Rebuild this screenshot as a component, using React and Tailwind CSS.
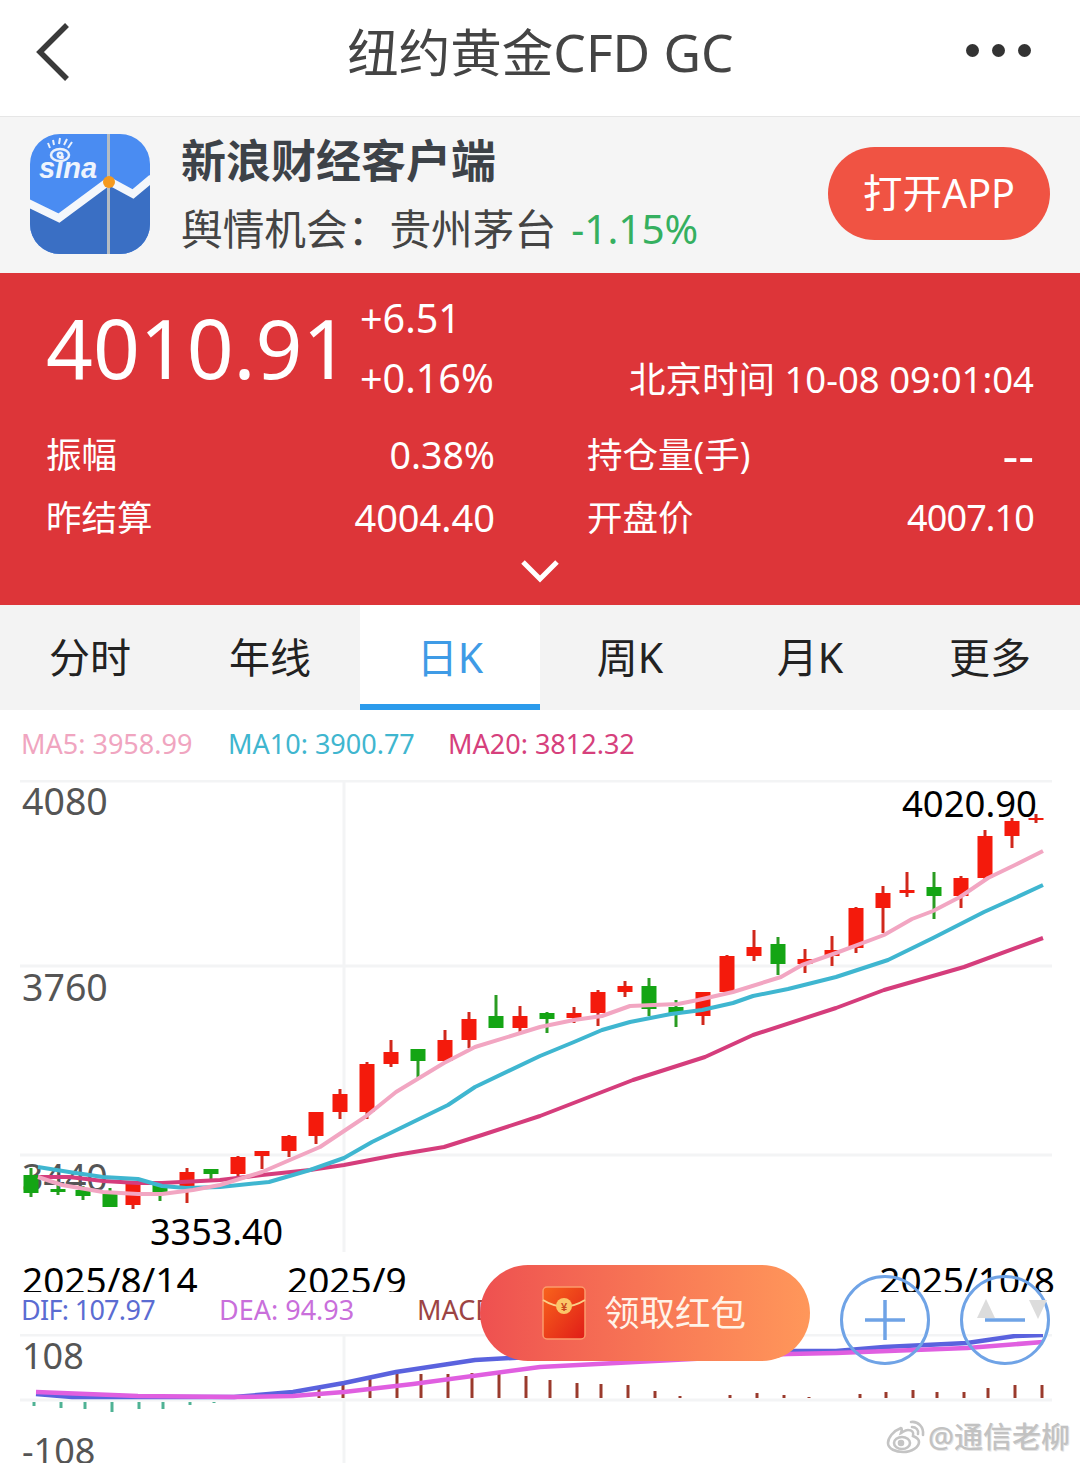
const FONT = "font-['Noto_Sans','Noto_Sans_CJK_SC',sans-serif]";

// x, wickTop, wickBottom, bodyTop, bodyBottom, up?
const candles = [
  [31, 1168, 1197, 1175, 1193, 0], [58, 1185, 1195, 1189, 1192, 0], [83, 1186, 1200, 1190, 1196, 0],
  [110, 1188, 1207, 1194, 1207, 0], [133, 1183, 1209, 1183, 1205, 1], [160, 1185, 1201, 1185, 1193, 0],
  [187, 1168, 1203, 1172, 1186, 1], [211, 1169, 1179, 1169, 1174, 0], [238, 1156, 1176, 1157, 1174, 1],
  [262, 1151, 1169, 1151, 1156, 1], [289, 1135, 1157, 1136, 1151, 1], [316, 1112, 1144, 1112, 1136, 1],
  [340, 1089, 1119, 1094, 1112, 1], [367, 1062, 1119, 1064, 1112, 1], [391, 1040, 1067, 1052, 1064, 1],
  [418, 1049, 1078, 1049, 1061, 0], [445, 1030, 1063, 1040, 1061, 1], [469, 1012, 1048, 1019, 1040, 1],
  [496, 995, 1028, 1016, 1028, 0], [520, 1006, 1032, 1016, 1028, 1], [547, 1012, 1033, 1013, 1019, 0],
  [574, 1007, 1023, 1013, 1018, 1], [598, 990, 1026, 992, 1013, 1], [625, 981, 997, 986, 992, 1],
  [649, 978, 1016, 986, 1009, 0], [676, 1000, 1027, 1007, 1013, 0], [703, 992, 1025, 992, 1016, 1],
  [727, 955, 992, 956, 992, 1], [754, 930, 961, 947, 956, 1], [778, 937, 975, 944, 964, 0],
  [805, 949, 973, 959, 964, 1], [832, 936, 966, 950, 956, 1], [856, 907, 953, 908, 948, 1],
  [883, 886, 933, 893, 908, 1], [907, 872, 897, 890, 893, 1], [934, 872, 919, 887, 896, 0],
  [961, 876, 908, 878, 896, 1], [985, 830, 880, 836, 878, 1], [1012, 818, 848, 821, 836, 1],
  [1036, 814, 823, 818, 820, 1],
];

const ma5 = "38,1177 62,1185 103,1192 138,1194 162,1194 193,1190 220,1185 262,1172 320,1147 365,1117 396,1092 444,1063 475,1047 540,1027 574,1020 602,1016 630,1006 678,1004 698,1000 733,992 781,977 802,965 836,953 884,935 912,919 933,911 960,897 988,878 1015,865 1043,851";
const ma10 = "38,1167 69,1172 103,1177 138,1179 162,1186 186,1188 220,1187 269,1182 310,1170 344,1158 372,1142 413,1122 448,1105 475,1087 540,1056 574,1042 602,1030 630,1022 671,1014 702,1010 733,1003 753,996 788,989 836,977 888,960 933,938 984,912 1015,898 1043,885";
const ma20 = "38,1177 69,1177 103,1181 138,1183 162,1183 220,1180 262,1175 310,1170 344,1165 396,1155 444,1147 482,1135 540,1116 633,1080 705,1057 753,1035 836,1008 884,990 964,967 1043,938";
const dif = "36,1394 72,1397 138,1397 234,1397 293,1392 344,1383 396,1372 475,1360 620,1352 788,1351 836,1351 884,1347 967,1343 1015,1336 1043,1335";
const dea = "36,1392 138,1396 234,1397 293,1396 344,1392 413,1384 540,1367 788,1354 836,1353 967,1348 1043,1342";

// macd bars: x, end of the bar
const macdDown = [[34, 1406], [61, 1408], [85, 1409], [112, 1412], [139, 1409], [163, 1409], [190, 1405], [214, 1403]];
const macdUp = [
  [269, 1397], [293, 1393], [319, 1389], [343, 1384], [370, 1378], [397, 1374], [421, 1374], [448, 1374], [472, 1373], [499, 1374], [526, 1376],
  [550, 1380], [577, 1383], [601, 1384], [628, 1385], [655, 1391], [680, 1396], [707, 1398], [730, 1395], [757, 1393], [784, 1395], [809, 1397], [835, 1398],
  [860, 1394], [886, 1392], [913, 1390], [937, 1392], [964, 1392], [988, 1388], [1015, 1385], [1042, 1385],
];

function Candle({ c }) {
  const [x, wt, wb, bt, bb, up] = c;
  return (
    <g>
      <line x1={x} x2={x} y1={wt} y2={wb} stroke={up ? "#d0281c" : "#2a9c22"} strokeWidth="3" />
      <rect x={x - 7.5} y={bt} width="15" height={Math.max(bb - bt, 2)} fill={up ? "#f41a0c" : "#14a514"} />
    </g>
  );
}

function SinaIcon() {
  return (
    <svg width="120" height="120" viewBox="0 0 120 120" className="block">
      <defs>
        <clipPath id="sq"><rect width="120" height="120" rx="30" /></clipPath>
      </defs>
      <g clipPath="url(#sq)">
        <rect width="120" height="120" fill="#4a8cf2" />
        <path d="M0 70 L29 84 L79 47 L103 60 L120 45 V120 H0 Z" fill="#3a6fc4" />
        <path d="M-2 69 L29 84 L79 47 L103 60 L122 44" fill="none" stroke="#f4f7fb" strokeWidth="8" />
        <rect x="77" width="3" height="120" fill="#b5bcc2" />
        <circle cx="79" cy="48" r="6" fill="#f59a1e" />
        <g fill="none" stroke="#eaf1fb" strokeWidth="2.6">
          <ellipse cx="30" cy="21" rx="9" ry="6" />
          <circle cx="30" cy="21" r="2.2" />
          <path d="M20 14 L18 9 M24 11 L23 6 M29 10 L30 4 M34 11 L37 5 M38 14 L42 8" strokeWidth="2" />
        </g>
        <text x="9" y="44" fill="#eef4fd" fontSize="29" fontWeight="700" fontStyle="italic" fontFamily="'Liberation Sans',sans-serif">sina</text>
      </g>
    </svg>
  );
}

function RedPacket() {
  return (
    <svg width="44" height="54" viewBox="0 0 44 54" className="block">
      <defs>
        <linearGradient id="env" x1="0" y1="0" x2="1" y2="1">
          <stop offset="0" stopColor="#f8641c" />
          <stop offset="1" stopColor="#e01c18" />
        </linearGradient>
      </defs>
      <rect x="1" y="1" width="42" height="52" rx="4" fill="url(#env)" stroke="#fb9a6c" strokeWidth="1.5" />
      <path d="M1 14 Q22 27 43 14" fill="none" stroke="#fbd08a" strokeWidth="2" />
      <circle cx="22" cy="20" r="8" fill="#fbc768" />
      <text x="22" y="24.5" textAnchor="middle" fontSize="11" fontWeight="700" fill="#c8461c" fontFamily="'Liberation Sans',sans-serif">¥</text>
    </svg>
  );
}

function WeiboLogo() {
  return (
    <svg width="40" height="36" viewBox="0 0 40 36" fill="none" stroke="#c4c4c4" strokeWidth="2.6">
      <path d="M15 10 C7 13 2 20 2 25 C2 31 10 34 17 34 C26 34 33 29 33 24 C33 20 29 19 27 18 C28 14 26 12 22 12 C19 12 17 14 15 15 C16 12 16 10 15 10 Z" fill="#fff" />
      <ellipse cx="16" cy="25" rx="8" ry="6" />
      <circle cx="15" cy="25" r="2" fill="#c4c4c4" />
      <path d="M25 4 C32 3 38 9 37 17 M26 9 C30 9 33 12 32 16" strokeLinecap="round" />
    </svg>
  );
}

export default function App() {
  return (
    <div className={`${FONT} relative flex h-[1463px] w-[1080px] flex-col overflow-hidden bg-white`}>
      {/* Header */}
      <header className="grid h-[116px] shrink-0 grid-cols-[1fr_auto_1fr] items-center pb-[10px] pl-[36px] pr-[49px]">
        <svg width="34" height="58" viewBox="0 0 34 58" fill="none" stroke="#3a3a3a" strokeWidth="5.5" className="mb-[2px]">
          <path d="M31 2 L4 29 L31 56" />
        </svg>
        <h1 className="ml-[14px] text-[51.5px] leading-none text-[#444]">纽约黄金CFD GC</h1>
        <div className="mb-[6px] flex justify-end gap-[13px]">
          <span className="size-[13px] rounded-full bg-[#333]" />
          <span className="size-[13px] rounded-full bg-[#333]" />
          <span className="size-[13px] rounded-full bg-[#333]" />
        </div>
      </header>

      {/* App banner */}
      <section className="flex h-[157px] shrink-0 items-center border-t border-[#e6e6e6] bg-[#f5f5f5] pb-[3px] pl-[30px] pr-[30px]">
        <SinaIcon />
        <div className="ml-[31px] mt-[3px] flex flex-1 flex-col">
          <div className="text-[45px] font-bold leading-[68px] text-[#3d4248]">新浪财经客户端</div>
          <div className="flex items-center text-[41.7px] leading-[68px] text-[#444]">
            <span>舆情机会：贵州茅台</span>
            <span className="ml-[15px] text-[40.5px] text-[#35b060]">-1.15%</span>
          </div>
        </div>
        <button className="h-[93px] w-[222px] rounded-full bg-[#f05343] text-[39.5px] text-white">打开APP</button>
      </section>

      {/* Quote panel */}
      <section className="flex h-[332px] shrink-0 flex-col bg-[#dd3539] px-[46px] text-white">
        <div className="flex h-[150px] items-start">
          <div className="mt-[19px] w-[314px] text-[82px] leading-[110px]">4010.91</div>
          <div className="mt-[15px] flex flex-col text-[39.5px] leading-[60px]">
            <span>+6.51</span>
            <span>+0.16%</span>
          </div>
          <div className="ml-auto mt-[76px] text-[36.5px] leading-[60px]">北京时间 10-08 09:01:04</div>
        </div>
        <div className="grid grid-cols-[449px_1fr] gap-x-[92px] text-[35.5px] leading-[63px]">
          <div className="flex justify-between"><span>振幅</span><span className="text-[37.5px]">0.38%</span></div>
          <div className="flex justify-between"><span>持仓量(手)</span><span className="text-[49px]">--</span></div>
          <div className="flex justify-between"><span>昨结算</span><span className="text-[38px]">4004.40</span></div>
          <div className="flex justify-between"><span>开盘价</span><span className="text-[36px] tracking-[-0.9px]">4007.10</span></div>
        </div>
        <div className="mt-[9px] flex justify-center">
          <svg width="40" height="26" viewBox="0 0 40 26" fill="none" stroke="#fff" strokeWidth="5">
            <path d="M3 4 L20 21 L37 4" />
          </svg>
        </div>
      </section>

      {/* Tabs */}
      <nav className="grid h-[105px] shrink-0 grid-cols-6 bg-[#f3f3f3] text-[41px] text-[#222]">
        <div className="flex items-center justify-center">分时</div>
        <div className="flex items-center justify-center">年线</div>
        <div className="flex items-center justify-center border-b-[6px] border-[#2b9bec] bg-white pt-[6px] text-[#3f9be6]">日K</div>
        <div className="flex items-center justify-center">周K</div>
        <div className="flex items-center justify-center">月K</div>
        <div className="flex items-center justify-center">更多</div>
      </nav>

      {/* MA legend */}
      <div className="flex h-[70px] shrink-0 items-center pb-[4px] pl-[21px] text-[27px] leading-none">
        <span className="w-[207px] text-[#f0a5c0]">MA5: 3958.99</span>
        <span className="w-[220px] text-[#3fb6cf]">MA10: 3900.77</span>
        <span className="text-[#d6407c]">MA20: 3812.32</span>
      </div>

      {/* Candle chart */}
      <div className="relative h-[472px] shrink-0">
        <span className="absolute left-[22px] top-[0px] text-[37.5px] leading-[42px] text-[#555]">4080</span>
        <span className="absolute left-[22px] top-[186px] text-[37.5px] leading-[42px] text-[#555]">3760</span>
        <span className="absolute left-[22px] top-[376px] text-[37.5px] leading-[42px] text-[#555]">3440</span>
        <svg width="1080" height="472" viewBox="0 780 1080 472" className="absolute inset-0">
          <g stroke="#f3f4f5" strokeWidth="3">
            <line x1="20" x2="1052" y1="781" y2="781" />
            <line x1="20" x2="1052" y1="966" y2="966" />
            <line x1="20" x2="1052" y1="1155" y2="1155" />
            <line x1="344" x2="344" y1="780" y2="1252" />
          </g>
          {candles.map((c) => <Candle key={c[0]} c={c} />)}
          <g fill="none" strokeWidth="4" strokeLinejoin="round">
            <polyline points={ma20} stroke="#d53d7c" />
            <polyline points={ma10} stroke="#3fb6d0" />
            <polyline points={ma5} stroke="#f2a6c2" />
          </g>
        </svg>
        <span className="absolute right-[43px] top-[2px] text-[36.5px] leading-[42px] text-black">4020.90</span>
        <span className="absolute left-[150px] top-[431px] text-[36px] leading-[42px] text-black">3353.40</span>
      </div>

      {/* Date axis, cut off by the row under it */}
      <div className="relative h-[40px] shrink-0 overflow-hidden text-[37px] leading-[56px] text-black">
        <span className="absolute left-[22px] top-0">2025/8/14</span>
        <span className="absolute left-[287px] top-0">2025/9</span>
        <span className="absolute right-[25px] top-0">2025/10/8</span>
      </div>

      {/* MACD legend */}
      <div className="flex h-[42px] shrink-0 items-center pb-[8px] pl-[21px] text-[27px] leading-none">
        <span className="w-[198px] tracking-[-0.7px] text-[#5b6cd2]">DIF: 107.97</span>
        <span className="w-[198px] text-[#c96fdb]">DEA: 94.93</span>
        <span className="text-[#9c4444]">MACD</span>
      </div>

      {/* MACD chart */}
      <div className="relative flex-1">
        <span className="absolute left-[22px] top-[1px] text-[36px] leading-[42px] text-[#555]">108</span>
        <span className="absolute left-[22px] top-[96px] text-[36px] leading-[42px] text-[#555]">-108</span>
        <svg width="1080" height="129" viewBox="0 1334 1080 129" className="absolute inset-0">
          <g stroke="#f3f4f5" strokeWidth="3">
            <line x1="20" x2="1052" y1="1335" y2="1335" />
            <line x1="20" x2="1052" y1="1400" y2="1400" />
            <line x1="344" x2="344" y1="1334" y2="1463" />
          </g>
          {macdDown.map(([x, y]) => <line key={x} x1={x} x2={x} y1="1402" y2={y} stroke="#4fb294" strokeWidth="3" />)}
          {macdUp.map(([x, y]) => <line key={x} x1={x} x2={x} y1={y} y2="1398" stroke="#9a3a2c" strokeWidth="3" />)}
          <g fill="none" strokeWidth="4.5" strokeLinejoin="round">
            <polyline points={dif} stroke="#5a62de" />
            <polyline points={dea} stroke="#e05fe0" />
          </g>
        </svg>
      </div>

      {/* Floating red packet pill */}
      <div className="absolute left-[480px] top-[1265px] flex h-[96px] w-[330px] items-center rounded-full bg-gradient-to-r from-[#ee5050] to-[#ff975a] pl-[62px]">
        <RedPacket />
        <span className="ml-[18px] text-[35.5px] leading-none text-[#fff3e8]">领取红包</span>
      </div>

      {/* Zoom buttons */}
      <div className="absolute left-[840px] top-[1275px] flex size-[90px] items-center justify-center rounded-full border-[3px] border-[#6fa3e6]">
        <svg width="44" height="44" viewBox="0 0 44 44" stroke="#6fa3e6" strokeWidth="3.5"><path d="M2 22 H42 M22 2 V42" /></svg>
      </div>
      <div className="absolute left-[960px] top-[1275px] flex size-[90px] items-center justify-center rounded-full border-[3px] border-[#6fa3e6]">
        <svg width="44" height="44" viewBox="0 0 44 44" stroke="#6fa3e6" strokeWidth="3.5"><path d="M2 22 H42" /></svg>
      </div>
      <svg width="70" height="20" viewBox="0 0 70 20" className="absolute left-[977px] top-[1299px]" fill="#dcdcdc">
        <path d="M9 0 L18 19 H0 Z" />
        <path d="M52 1 H70 L61 20 Z" />
      </svg>

      {/* Watermark */}
      <div className="absolute left-[886px] top-[1418px] flex items-center gap-[2px] text-[29px] font-medium leading-none text-[#c2c2c2] [text-shadow:1px_1px_0_#e4e4e4]">
        <WeiboLogo />
        <span>@通信老柳</span>
      </div>
    </div>
  );
}
